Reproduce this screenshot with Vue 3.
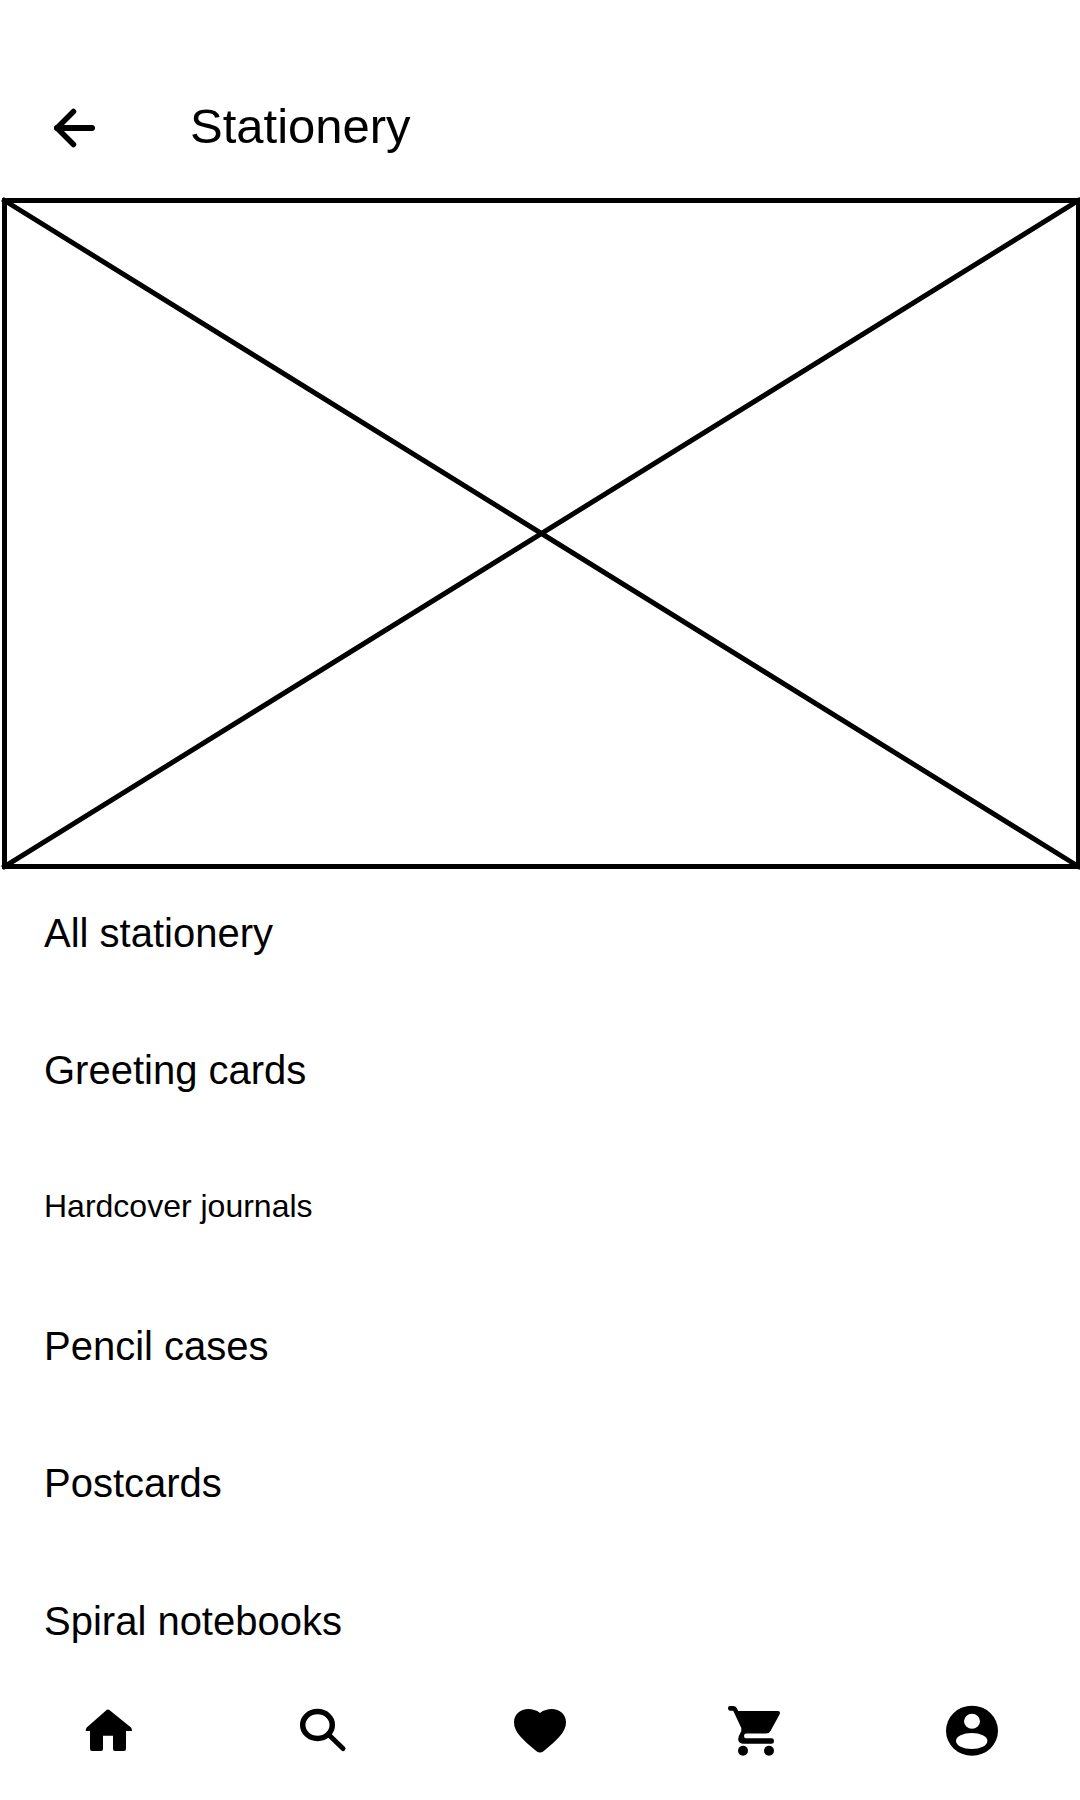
<script setup>
const categories = [
  { name: 'All stationery' },
  { name: 'Greeting cards' },
  { name: 'Hardcover journals', compact: true },
  { name: 'Pencil cases' },
  { name: 'Postcards' },
  { name: 'Spiral notebooks' },
]
</script>

<template>
  <div class="page">
    <header class="top-bar">
      <button class="back" type="button" aria-label="Back">
        <svg viewBox="0 0 44 44" aria-hidden="true">
          <path d="M21.500 5.500 5 22l16.500 16.500" stroke-width="5.500" />
          <path d="M5 22h35" stroke-width="6" />
        </svg>
      </button>
      <h1>Stationery</h1>
    </header>

    <main>
      <svg class="banner" viewBox="0 0 1080 671" role="img" aria-label="Banner image">
        <rect x="4.5" y="2.5" width="1074" height="666" />
        <path d="M4.500 2.500 1078.500 668.500M1078.500 2.500 4.500 668.500" stroke-linecap="square" />
      </svg>

      <ul class="categories">
        <li v-for="category in categories" :key="category.name">
          <a href="#" :class="{ compact: category.compact }">{{ category.name }}</a>
        </li>
      </ul>
    </main>

    <nav class="tabs" aria-label="Main">
      <a href="#" aria-label="Home">
        <svg viewBox="0 0 62 60" aria-hidden="true">
          <path d="M29 9.500q2-1.800 4 0L54 26.500q1 1 1 3.500H49V48q0 2-2 2H38q-2 0-2-2V34.700H26V48q0 2-2 2H15q-2 0-2-2V30H8.700q0-2.500 1-3.500Z" />
        </svg>
      </a>
      <a href="#" aria-label="Search">
        <svg viewBox="0 0 62 60" aria-hidden="true">
          <ellipse cx="24.500" cy="24" rx="14.800" ry="13.400" fill="none" stroke="#000" stroke-width="5.500" />
          <path d="M36.500 34.500 50 47.500" stroke="#000" stroke-width="5" stroke-linecap="round" />
        </svg>
      </a>
      <a href="#" aria-label="Favourites">
        <svg viewBox="0 0 62 60" aria-hidden="true">
          <path d="M31 12C27.500 9 23 8 19.500 8 11 8 5 13.500 5 21.500 5 31 13.500 38.500 27.500 50.300Q31 52.700 34.500 50.300C48.500 38.500 57 31 57 21.500 57 13.500 51 8 42.500 8 39 8 34.500 9 31 12Z" />
        </svg>
      </a>
      <a href="#" aria-label="Cart">
        <svg viewBox="0 0 62 60" aria-hidden="true">
          <path d="M5 5H8.500Q11 5 12 7.500L13.200 10H53Q56 10.500 54.500 13.500L45.500 30Q44 32.500 41 32.500H21Q19 32.500 19 35 19 37.300 21 37.300H47Q49 37.300 49 40T47 42.700H18Q13 42.300 13.200 38 13.500 35 16.300 30V27L8.200 9.700H5Q3 9.700 3 7.300T5 5Z" />
          <circle cx="18" cy="49.700" r="5" />
          <circle cx="44" cy="49.700" r="5" />
        </svg>
      </a>
      <a href="#" aria-label="Account">
        <svg viewBox="0 0 62 60" aria-hidden="true">
          <ellipse cx="31" cy="29.700" rx="26" ry="25" />
          <ellipse cx="31" cy="20.200" rx="8" ry="7.500" fill="#fff" />
          <ellipse cx="30.700" cy="40" rx="15.700" ry="8" fill="#fff" />
        </svg>
      </a>
    </nav>
  </div>
</template>

<style>
body {
  margin: 0;
  background: #fff;
}
</style>

<style scoped>
.page {
  display: flex;
  flex-direction: column;
  min-height: 100vh;
  overflow: hidden;
  color: #000;
  font-family: "Liberation Sans", Arial, sans-serif;
}

.top-bar {
  display: flex;
  align-items: center;
  gap: 94px;
  height: 140px;
  padding: 58px 52px 0;
}

.back {
  padding: 0;
  border: 0;
  background: none;
}

.back svg {
  display: block;
  width: 44px;
  height: 44px;
  fill: none;
  stroke: #000;
  stroke-linecap: round;
  stroke-linejoin: round;
}

h1 {
  margin: 0;
  padding-bottom: 4px;
  font-size: 49px;
  line-height: 56px;
  font-weight: 400;
}

main {
  display: flex;
  flex: 1;
  flex-direction: column;
}

.banner {
  display: block;
  width: 100%;
  overflow: visible;
  fill: none;
  stroke: #000;
  stroke-width: 5;
}

.categories {
  display: grid;
  flex: 1;
  grid-auto-rows: 1fr;
  margin: 0;
  padding: 0;
  list-style: none;
}

.categories a {
  box-sizing: border-box;
  display: flex;
  align-items: center;
  height: 100%;
  padding: 0 44px 10px;
  color: inherit;
  font-size: 40px;
  line-height: 48px;
  text-decoration: none;
}

.categories .compact {
  padding-bottom: 14px;
  font-size: 32px;
}

.tabs {
  display: grid;
  grid-template-columns: repeat(5, 1fr);
  padding: 6px 0 39px;
}

.tabs a {
  display: flex;
  justify-content: center;
}

.tabs svg {
  width: 62px;
  height: 60px;
}
</style>
